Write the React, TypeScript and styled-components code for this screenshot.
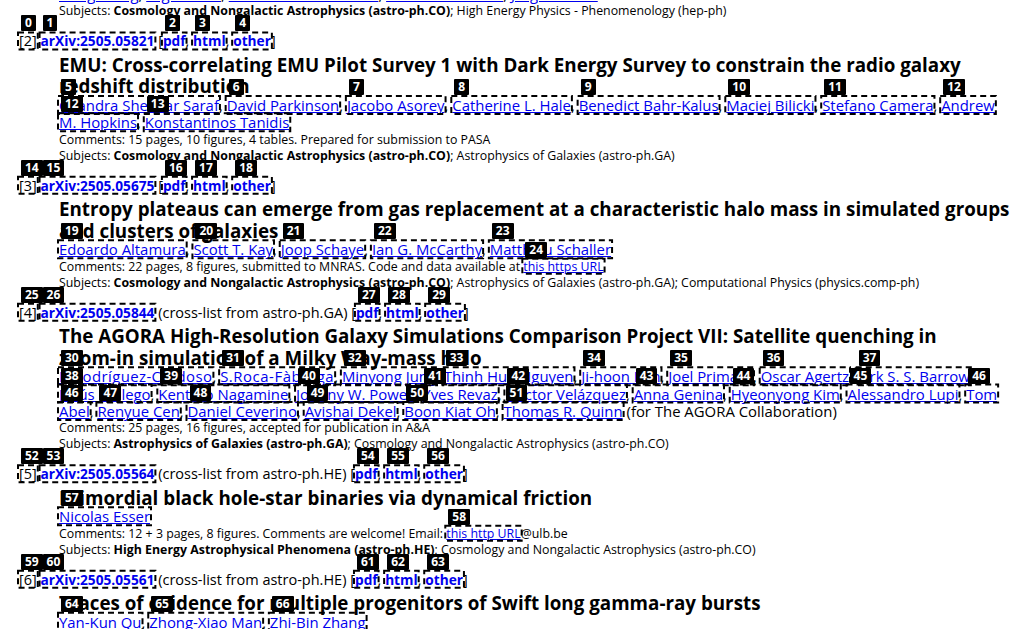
import React, { useLayoutEffect, useRef, useState } from "react";
import styled, { createGlobalStyle } from "styled-components";

const GlobalStyle = createGlobalStyle`
  html, body {
    margin: 0;
    padding: 0;
    background: #fff;
    overflow: hidden;
  }
  body {
    font-family: "Open Sans", "DejaVu Sans", sans-serif;
    color: #000;
  }
`;

const BLUE = "#0000ee";

const Page = styled.div`
  position: relative;
  width: 1024px;
  height: 629px;
  overflow: hidden;
`;

const Listing = styled.div`
  margin-top: -14px;
  padding-right: 14px;
`;

const Entry = styled.div`
  & + & {
    margin-top: 12px;
  }
`;

const IdLine = styled.div`
  padding-left: 19px;
  font-size: 14.5px;
  line-height: 20px;
  white-space: nowrap;
`;

const BoldLink = styled.a`
  color: ${BLUE};
  font-weight: 700;
  font-size: 13.7px;
  text-decoration: none;
`;

const Body = styled.div`
  padding-left: 59px;
`;

const Title = styled.div`
  margin-top: 3.5px;
  margin-bottom: -1px;
  font-weight: 700;
  font-size: 18.8px;
  line-height: 21.5px;
`;

const NoWrap = styled.span`
  white-space: nowrap;
`;

const Authors = styled.div`
  font-size: 14.9px;
  line-height: 17.4px;
`;

const Link = styled.a<{ $track?: number }>`
  color: ${BLUE};
  text-decoration: underline;
  text-underline-offset: 1px;
  letter-spacing: ${({ $track = 0 }) => $track}px;
`;

const Meta = styled.div`
  font-size: 12.35px;
  line-height: 16px;
`;

const Overlay = styled.div`
  position: absolute;
  inset: 0;
  pointer-events: none;
`;

const Dashes = styled.svg`
  position: absolute;
  left: 0;
  top: 0;
`;

const Tag = styled.div`
  position: absolute;
  height: 16px;
  padding: 0 4px;
  background: #000;
  color: #fff;
  font-family: "Open Sans", "DejaVu Sans", sans-serif;
  font-weight: 700;
  font-size: 12px;
  line-height: 16px;
  border-radius: 1px;
`;

type Part = string | { url: string };
// a name, or a name with extra tracking where the original face runs wider
type Author = string | [string, number];

type Paper = {
  n: number;
  id: string;
  cross?: string;
  title: string;
  authors: Author[];
  suffix?: string;
  comments?: Part[];
  primary: string;
  others: string;
};

const papers: Paper[] = [
  {
    n: 2,
    id: "2505.05821",
    title:
      "EMU: Cross-correlating EMU Pilot Survey 1 with Dark Energy Survey to constrain the radio galaxy redshift distribution",
    authors: [
      "Chandra Shekhar Saraf",
      "David Parkinson",
      "Jacobo Asorey",
      "Catherine L. Hale",
      "Benedict Bahr-Kalus",
      "Maciej Bilicki",
      "Stefano Camera",
      "Andrew M. Hopkins",
      "Konstantinos Tanidis",
    ],
    comments: ["15 pages, 10 figures, 4 tables. Prepared for submission to PASA"],
    primary: "Cosmology and Nongalactic Astrophysics (astro-ph.CO)",
    others: "; Astrophysics of Galaxies (astro-ph.GA)",
  },
  {
    n: 3,
    id: "2505.05675",
    title:
      "Entropy plateaus can emerge from gas replacement at a characteristic halo mass in simulated groups and clusters of galaxies",
    authors: [
      "Edoardo Altamura",
      "Scott T. Kay",
      "Joop Schaye",
      "Ian G. McCarthy",
      "Matthieu Schaller",
    ],
    comments: [
      "22 pages, 8 figures, submitted to MNRAS. Code and data available at ",
      { url: "this https URL" },
    ],
    primary: "Cosmology and Nongalactic Astrophysics (astro-ph.CO)",
    others:
      "; Astrophysics of Galaxies (astro-ph.GA); Computational Physics (physics.comp-ph)",
  },
  {
    n: 4,
    id: "2505.05844",
    cross: "astro-ph.GA",
    title:
      "The AGORA High-Resolution Galaxy Simulations Comparison Project VII: Satellite quenching in zoom-in simulation of a Milky Way-mass halo",
    authors: [
      ["R.Rodríguez-Cardoso", 0.42],
      ["S.Roca-Fàbrega", 0.55],
      "Minyong Jung",
      "Thinh Huu Nguyen",
      "Ji-hoon Kim",
      "Joel Primack",
      "Oscar Agertz",
      "Kirk S. S. Barrow",
      "Jesús Gallego",
      "Kentaro Nagamine",
      "Johnny W. Powell",
      "Yves Revaz",
      "Héctor Velázquez",
      "Anna Genina",
      "Hyeonyong Kim",
      "Alessandro Lupi",
      "Tom Abel",
      "Renyue Cen",
      "Daniel Ceverino",
      "Avishai Dekel",
      "Boon Kiat Oh",
      "Thomas R. Quinn",
    ],
    suffix: " (for The AGORA Collaboration)",
    comments: ["25 pages, 16 figures, accepted for publication in A&A"],
    primary: "Astrophysics of Galaxies (astro-ph.GA)",
    others: "; Cosmology and Nongalactic Astrophysics (astro-ph.CO)",
  },
  {
    n: 5,
    id: "2505.05564",
    cross: "astro-ph.HE",
    title: "Primordial black hole-star binaries via dynamical friction",
    authors: ["Nicolas Esser"],
    comments: [
      "12 + 3 pages, 8 figures. Comments are welcome! Email: ",
      { url: "this http URL" },
      "@ulb.be",
    ],
    primary: "High Energy Astrophysical Phenomena (astro-ph.HE)",
    others: "; Cosmology and Nongalactic Astrophysics (astro-ph.CO)",
  },
  {
    n: 6,
    id: "2505.05561",
    cross: "astro-ph.HE",
    title:
      "Traces of evidence for multiple progenitors of Swift long gamma-ray bursts",
    authors: ["Yan-Kun Qu", "Zhong-Xiao Man", "Zhi-Bin Zhang"],
    primary: "High Energy Astrophysical Phenomena (astro-ph.HE)",
    others: "; Cosmology and Nongalactic Astrophysics (astro-ph.CO)",
  },
];

// hyphenated words stay whole, as in the original where they never split
const TitleText = ({ text }: { text: string }) => (
  <>
    {text.split(" ").map((w, i) => (
      <React.Fragment key={i}>
        {i > 0 && " "}
        {w.includes("-") ? <NoWrap>{w}</NoWrap> : w}
      </React.Fragment>
    ))}
  </>
);

const AuthorList = ({ names, mark }: { names: Author[]; mark: boolean }) => (
  <>
    {names.map((a, i) => {
      const [name, track] = typeof a === "string" ? [a, 0] : a;
      return (
        <React.Fragment key={name}>
          {i > 0 && ", "}
          <Link href="#" $track={track} data-mark={mark ? "" : undefined}>
            {name}
          </Link>
        </React.Fragment>
      );
    })}
  </>
);

const Subjects = ({ primary, others }: { primary: string; others: string }) => (
  <Meta>
    Subjects: <b>{primary}</b>
    {others}
  </Meta>
);

const PaperEntry = ({ p }: { p: Paper }) => (
  <Entry>
    <IdLine>
      <span data-mark="">{`[${p.n}]`}</span>{" "}
      <BoldLink href="#" data-mark="">
        {`arXiv:${p.id}`}
      </BoldLink>
      {p.cross ? ` (cross-list from ${p.cross}) [` : " ["}
      <BoldLink href="#" data-mark="">
        pdf
      </BoldLink>
      {", "}
      <BoldLink href="#" data-mark="">
        html
      </BoldLink>
      {", "}
      <BoldLink href="#" data-mark="">
        other
      </BoldLink>
      ]
    </IdLine>
    <Body>
      <Title>
        <TitleText text={p.title} />
      </Title>
      <Authors>
        <AuthorList names={p.authors} mark />
        {p.suffix}
      </Authors>
      {p.comments && (
        <Meta>
          {"Comments: "}
          {p.comments.map((c, i) =>
            typeof c === "string" ? (
              <React.Fragment key={i}>{c}</React.Fragment>
            ) : (
              <Link key={i} href="#" data-mark="">
                {c.url}
              </Link>
            )
          )}
        </Meta>
      )}
      <Subjects primary={p.primary} others={p.others} />
    </Body>
  </Entry>
);

type Box = { n: number; x: number; y: number; w: number; h: number };

export default function App() {
  const ref = useRef<HTMLDivElement>(null);
  const [boxes, setBoxes] = useState<Box[]>([]);

  useLayoutEffect(() => {
    const measure = () => {
      const root = ref.current;
      if (!root) return;
      const base = root.getBoundingClientRect();
      const out: Box[] = [];
      root.querySelectorAll("[data-mark]").forEach((el, n) => {
        Array.from(el.getClientRects()).forEach((r) => {
          if (r.width < 1) return;
          out.push({
            n,
            x: r.left - base.left - 2,
            y: r.top - base.top,
            w: r.width + 4,
            h: r.height,
          });
        });
      });
      setBoxes(out);
    };
    measure();
    document.fonts?.ready.then(measure);
  }, []);

  return (
    <>
      <GlobalStyle />
      <Page ref={ref}>
        <Listing>
          <Entry>
            <Body>
              <Authors>
                <AuthorList
                  names={[
                    "Deng Wang",
                    "Olga Mena",
                    "Eleonora Di Valentino",
                    "Stefano Gariazzo",
                    "Jorge Alonso",
                  ]}
                  mark={false}
                />
              </Authors>
              <Subjects
                primary="Cosmology and Nongalactic Astrophysics (astro-ph.CO)"
                others="; High Energy Physics - Phenomenology (hep-ph)"
              />
            </Body>
          </Entry>
          {papers.map((p) => (
            <PaperEntry key={p.id} p={p} />
          ))}
        </Listing>
        <Overlay>
          <Dashes width={1024} height={629}>
            {boxes.map((b, i) => (
              <rect
                key={i}
                x={b.x + 1}
                y={b.y + 1}
                width={b.w - 2}
                height={b.h - 2}
                fill="none"
                stroke="#000"
                strokeWidth={2}
                strokeDasharray="6 4"
              />
            ))}
          </Dashes>
          {boxes.map((b, i) => (
            <Tag key={i} style={{ left: b.x + 4, top: b.y - 16 }}>
              {b.n}
            </Tag>
          ))}
        </Overlay>
      </Page>
    </>
  );
}
